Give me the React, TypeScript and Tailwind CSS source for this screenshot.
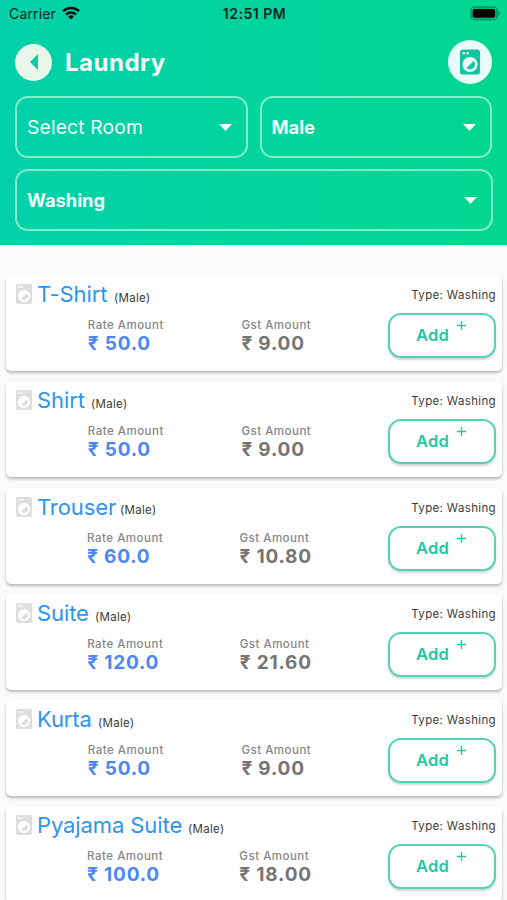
import React from "react";
import { MdLocalLaundryService } from "react-icons/md";

type Item = { name: string; nameWidth: string; rate: string; gst: string };

const items: Item[] = [
  { name: "T-Shirt", nameWidth: "w-[77px]", rate: "50.0", gst: "9.00" },
  { name: "Shirt", nameWidth: "w-[54px]", rate: "50.0", gst: "9.00" },
  { name: "Trouser", nameWidth: "w-[83px]", rate: "60.0", gst: "10.80" },
  { name: "Suite", nameWidth: "w-[58px]", rate: "120.0", gst: "21.60" },
  { name: "Kurta", nameWidth: "w-[61px]", rate: "50.0", gst: "9.00" },
  { name: "Pyajama Suite", nameWidth: "w-[151px]", rate: "100.0", gst: "18.00" },
];

function StatusBar() {
  return (
    <div className="flex h-[28px] items-center justify-between pl-[9px] pr-[7px] text-[#06281e]">
      <div className="flex w-[120px] items-center gap-[6px]">
        <span className="-mt-[1px] text-[14px] leading-[17px] tracking-[0.15px]">Carrier</span>
        <svg className="-mt-[2px]" width="18" height="14" viewBox="0 0 18 14" fill="none" stroke="#06110d" strokeWidth="2.5">
          <path d="M1 5.2a11.4 11.4 0 0 1 16 0" />
          <path d="M4 8.5a7.2 7.2 0 0 1 10 0" />
          <path d="M9 13.4 6.1 10.6a4.2 4.2 0 0 1 5.8 0Z" fill="#06110d" stroke="none" />
        </svg>
      </div>
      <span className="-mt-[1px] text-[14px] font-semibold leading-[17px] tracking-[0.5px]">12:51 PM</span>
      <div className="flex w-[120px] justify-end">
        <svg className="-mt-[1px]" width="30" height="15" viewBox="0 0 30 15">
          <rect x="0.8" y="0.8" width="26.4" height="13" rx="4" fill="#000" fillOpacity=".12" stroke="#000" strokeOpacity=".3" strokeWidth="1.2" />
          <rect x="2.7" y="2.9" width="22.4" height="8.8" rx="2" fill="#000" />
          <path d="M28.3 5.2c2.2.6 2.2 3.6 0 4.2Z" fill="#000" fillOpacity=".35" />
        </svg>
      </div>
    </div>
  );
}

function Select({ label, bold, className }: { label: string; bold?: boolean; className: string }) {
  return (
    <div className={`flex h-[62px] items-center justify-between rounded-[13px] border-2 border-[#7eeecb] pl-[10px] pr-[14px] text-[#f0fffa] ${className}`}>
      <span className={bold ? "pt-[1px] text-[18.3px] font-bold" : "text-[19.3px] tracking-[0.15px]"}>{label}</span>
      <svg width="13" height="7" viewBox="0 0 13 7">
        <path d="M0 0h13L6.5 7Z" fill="#f0fffa" />
      </svg>
    </div>
  );
}

function Card({ name, nameWidth, rate, gst }: Item) {
  return (
    <div className="flex h-[96px] shrink-0 rounded-[5px] bg-white shadow-[0_2px_3px_rgba(0,0,0,0.27)]">
      <div className="flex w-[344px] flex-col">
        <div className="flex h-[38px] items-center pl-[6px]">
          <MdLocalLaundryService size={24} className="shrink-0 text-[#dedede]" />
          <span className={`ml-[1px] shrink-0 whitespace-nowrap text-[22px] leading-[38px] tracking-[-0.1px] text-[#2c96ee] ${nameWidth}`}>{name}</span>
          <span className="mt-[9px] text-[11.5px] tracking-[0.3px] text-[#3a3a3a]">(Male)</span>
        </div>
        <div className="ml-[43px] mt-[5px] flex justify-around">
          <div>
            <div className="whitespace-nowrap text-[11.5px] font-medium leading-[15px] tracking-[0.5px] text-[#868686]">Rate Amount</div>
            <div className="whitespace-nowrap text-[19px] font-bold leading-[22px] tracking-[0.8px] text-[#4b88f2]">₹ {rate}</div>
          </div>
          <div>
            <div className="whitespace-nowrap text-[11.5px] font-medium leading-[15px] tracking-[0.5px] text-[#868686]">Gst Amount</div>
            <div className="whitespace-nowrap text-[19px] font-bold leading-[22px] tracking-[0.8px] text-[#757575]">₹ {gst}</div>
          </div>
        </div>
      </div>
      <div className="flex flex-1 flex-col items-end pr-[6px]">
        <div className="mt-[11px] whitespace-nowrap text-[11.5px] leading-[18px] tracking-[0.35px] text-[#3c3c3c]">Type: Washing</div>
        <div className="mt-[9px] flex h-[45px] w-[108px] gap-[8px] rounded-[13px] border-2 border-[#52d3b8] bg-white pl-[26px] text-[#21c8a5] shadow-[0_2px_2px_rgba(0,0,0,0.17)]">
          <span className="text-[16.5px] font-semibold leading-[41px] tracking-[0.2px]">Add</span>
          <svg className="mt-[6px]" width="9" height="9" viewBox="0 0 9 9" fill="none" stroke="currentColor" strokeWidth="1.4">
            <path d="M4.5 0v9M0 4.5h9" />
          </svg>
        </div>
      </div>
    </div>
  );
}

export default function App() {
  return (
    <div className="h-[900px] w-[507px] overflow-hidden bg-[#fafafa] font-['Inter','Noto_Sans',sans-serif]">
      <header className="h-[245px] bg-linear-to-r from-[#03d0aa] to-[#02d78f]">
        <StatusBar />
        <div className="flex h-[68px] items-center px-[15px]">
          <div className="flex h-[37px] w-[37px] items-center justify-center rounded-full bg-[#e7f6e9]">
            <svg width="8" height="16" viewBox="0 0 8 16">
              <path d="M8 0v16L0 8Z" fill="#10c9a2" />
            </svg>
          </div>
          <h1 className="ml-[13px] flex-1 pt-[1px] text-[24px] font-bold leading-none tracking-[0.5px] text-[#f4fffb]">Laundry</h1>
          <div className="flex h-[44px] w-[44px] items-center justify-center rounded-full bg-[#e8fcf8]">
            <MdLocalLaundryService size={30} className="text-[#14c4a1]" />
          </div>
        </div>
        <div className="flex gap-[12px] px-[15px]">
          <Select label="Select Room" className="w-[233px]" />
          <Select label="Male" bold className="w-[233px]" />
        </div>
        <div className="mt-[11px] pl-[15px]">
          <Select label="Washing" bold className="w-[478px]" />
        </div>
      </header>
      <main className="flex flex-col gap-[10.3px] pl-[6px] pr-[5px] pt-[30px]">
        {items.map((item) => (
          <Card key={item.name} {...item} />
        ))}
      </main>
    </div>
  );
}
